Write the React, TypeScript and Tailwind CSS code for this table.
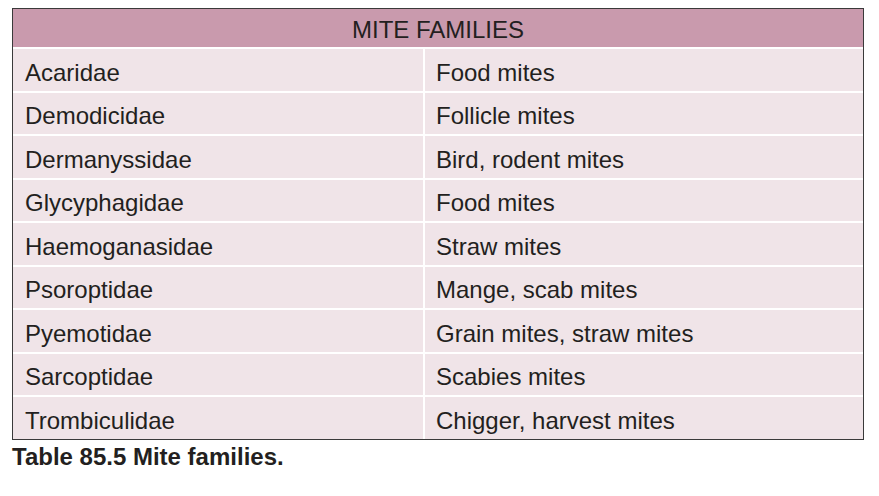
const rows: [string, string][] = [
  ["Acaridae", "Food mites"],
  ["Demodicidae", "Follicle mites"],
  ["Dermanyssidae", "Bird, rodent mites"],
  ["Glycyphagidae", "Food mites"],
  ["Haemoganasidae", "Straw mites"],
  ["Psoroptidae", "Mange, scab mites"],
  ["Pyemotidae", "Grain mites, straw mites"],
  ["Sarcoptidae", "Scabies mites"],
  ["Trombiculidae", "Chigger, harvest mites"],
];

export default function App() {
  return (
    <div className="min-h-screen w-[879px] bg-white pl-[12px] pt-[8px] font-['Liberation_Sans',Arial,sans-serif] text-[#231f20]">
      <div className="w-[852px] border-[1.5px] border-[#3a3a3a] bg-white">
        <div className="flex h-[38px] items-center justify-center bg-[#c99aad] pt-[3px] text-[24px] leading-none">
          MITE FAMILIES
        </div>
        {rows.map(([family, name]) => (
          <div key={family} className="mt-[2px] flex h-[41.5px] text-[24px] leading-none">
            <div className="flex w-[410px] items-center bg-[#f0e4e8] pl-[12px] pt-[6px]">{family}</div>
            <div className="ml-[2px] flex flex-1 items-center bg-[#f0e4e8] pl-[11px] pt-[6px]">{name}</div>
          </div>
        ))}
      </div>
      <p className="mt-[5px] text-[24px] font-bold leading-none">
        Table 85.5 Mite families.
      </p>
    </div>
  );
}
